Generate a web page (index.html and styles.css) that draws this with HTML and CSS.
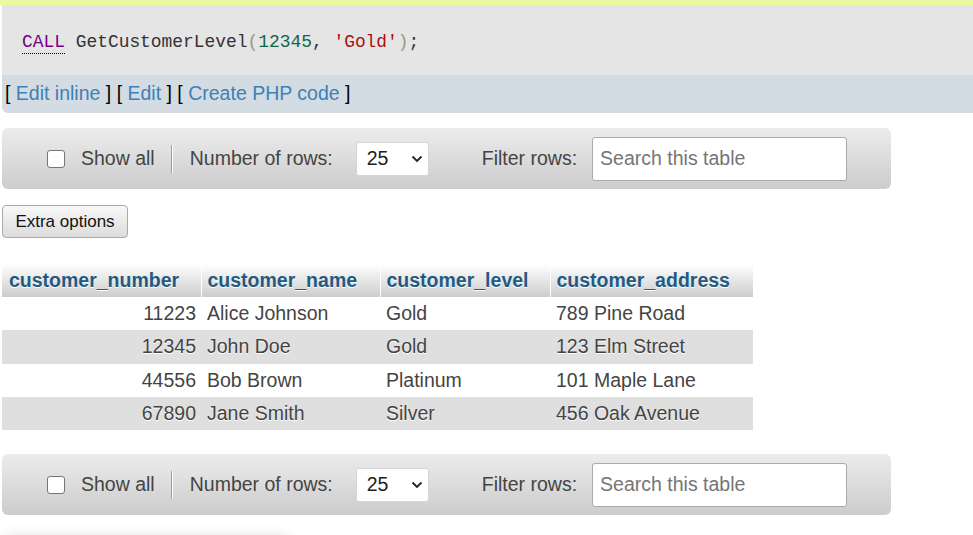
FILE: index.html
```html
<!DOCTYPE html>
<html>
<head>
<meta charset="utf-8">
<link rel="stylesheet" href="styles.css">
</head>
<body>
<div class="topstrip"></div>
<div class="sqlbox">
  <div class="code"><span class="codeline"><span class="kw">CALL</span> <span class="fn">GetCustomerLevel</span><span class="par">(</span><span class="num">12345</span>, <span class="str">'Gold'</span><span class="par">)</span>;</span></div>
  <div class="tools"><span class="toolline">[ <a class="lnk">Edit inline</a> ] [ <a class="lnk">Edit</a> ] [ <a class="lnk">Create PHP code</a> ]</span></div>
</div>

<div class="navbar first">
  <span class="chk"></span>
  <span class="lbl showall">Show all</span>
  <span class="sep"></span>
  <span class="lbl">Number of rows:</span>
  <span class="select">25<svg class="chev" width="12" height="8" viewBox="0 0 12 8"><path d="M1.5 1.5 L6 6 L10.5 1.5" fill="none" stroke="#222" stroke-width="1.8"/></svg></span>
  <span class="lbl filter">Filter rows:</span>
  <span class="search">Search this table</span>
</div>

<div class="extra"><span class="btn">Extra options</span></div>

<table class="data">
  <thead>
    <tr><th class="c1">customer_number</th><th class="c2">customer_name</th><th class="c3">customer_level</th><th class="c4">customer_address</th></tr>
  </thead>
  <tbody>
    <tr><td class="right">11223</td><td>Alice Johnson</td><td>Gold</td><td>789 Pine Road</td></tr>
    <tr class="even"><td class="right">12345</td><td>John Doe</td><td>Gold</td><td>123 Elm Street</td></tr>
    <tr><td class="right">44556</td><td>Bob Brown</td><td>Platinum</td><td>101 Maple Lane</td></tr>
    <tr class="even"><td class="right">67890</td><td>Jane Smith</td><td>Silver</td><td>456 Oak Avenue</td></tr>
  </tbody>
</table>

<div class="navbar second">
  <span class="chk"></span>
  <span class="lbl showall">Show all</span>
  <span class="sep"></span>
  <span class="lbl">Number of rows:</span>
  <span class="select">25<svg class="chev" width="12" height="8" viewBox="0 0 12 8"><path d="M1.5 1.5 L6 6 L10.5 1.5" fill="none" stroke="#222" stroke-width="1.8"/></svg></span>
  <span class="lbl filter">Filter rows:</span>
  <span class="search">Search this table</span>
</div>

<div class="shadowbox"></div>
</body>
</html>
```

FILE: styles.css
```css
html { overflow: hidden; }
body {
  margin: 0;
  font-family: "Liberation Sans", Arial, sans-serif;
  font-size: 19.5px;
  color: #444;
  background: #fff;
}
.topstrip {
  height: 5px;
  background: #ebf9a2;
}
.sqlbox {
  margin-left: 2px;
}
.code {
  height: 70px;
  background: #e5e5e5;
  box-sizing: border-box;
  padding: 3px 0 0 20px;
  display: flex;
  align-items: center;
  font-family: "Liberation Mono", "DejaVu Sans Mono", monospace;
  font-size: 17.9px;
  color: #333;
}
.codeline { white-space: pre; }
.kw {
  color: #770088;
  border-bottom: 1px dotted #000;
  padding-bottom: 1px;
}
.fn { color: #333; }
.par { color: #997; }
.num { color: #116644; }
.str { color: #aa1111; }
.tools {
  height: 38px;
  background: #d3dce3;
  border-bottom-left-radius: 6px;
  display: flex;
  align-items: center;
  padding-left: 3px;
  color: #000;
}
.toolline { white-space: pre; margin-top: -1px; }
.lnk {
  color: #3e80b8;
}
.navbar {
  margin-left: 2px;
  width: 889px;
  height: 61px;
  border-radius: 6px;
  background: linear-gradient(#ececec, #cccccc);
  display: flex;
  align-items: center;
  box-sizing: border-box;
  padding-left: 45px;
}
.navbar.first { margin-top: 15px; }
.navbar.second { margin-top: 24px; }
.chk {
  width: 16px;
  height: 16px;
  border: 1px solid #767676;
  border-radius: 3px;
  background: #fff;
  flex: none;
}
.lbl {
  color: #444;
  white-space: nowrap;
}
.showall { margin-left: 16px; }
.sep {
  width: 1px;
  height: 28px;
  background: #a49c8f;
  border-right: 1px solid #fff;
  margin: 0 17px 0 16px;
}
.select {
  margin-left: 23px;
  width: 73px;
  height: 34px;
  box-sizing: border-box;
  background: #fff;
  border: 1px solid #d6d6d6;
  border-radius: 3px;
  display: flex;
  align-items: center;
  padding-left: 10px;
  color: #222;
}
.chev {
  margin-left: 23px;
}
.filter { margin-left: 53px; }
.search {
  margin-left: 15px;
  width: 255px;
  height: 44px;
  box-sizing: border-box;
  background: #fff;
  border: 1px solid #aaa;
  border-radius: 3px;
  display: flex;
  align-items: center;
  padding-left: 7px;
  color: #757575;
}
.extra {
  margin: 16px 0 0 2px;
  height: 33px;
}
.btn {
  display: inline-flex;
  align-items: center;
  justify-content: center;
  width: 126px;
  height: 33px;
  box-sizing: border-box;
  border: 1px solid #aaa;
  border-radius: 4px;
  background: linear-gradient(#f8f8f8, #dcdcdc);
  font-size: 17px;
  color: #111;
}
.data {
  margin: 26px 0 0 2px;
  border-collapse: collapse;
  table-layout: fixed;
  width: 751px;
}
.data th {
  height: 33px;
  padding: 0 0 0 7px;
  text-align: left;
  font-weight: bold;
  color: #235a81;
  text-shadow: 0 1px 0 #fff;
  background: linear-gradient(#ffffff, #cccccc);
  border-right: 1px solid #fff;
  box-sizing: border-box;
  white-space: nowrap;
}
.data th.c1 { width: 199px; }
.data th.c2 { width: 179px; padding-left: 6px; }
.data th.c3 { width: 170px; padding-left: 6px; }
.data th.c4 { width: 203px; padding-left: 6px; border-right: none; }
.data td {
  height: 33.3px;
  padding: 0 0 0 6px;
  color: #444;
  text-shadow: 0 1px 0 #fff;
  white-space: nowrap;
}
.data td.right {
  text-align: right;
  padding: 0 5px 0 0;
}
.data tr.even td { background: #dfdfdf; }
.shadowbox {
  margin: 24px 0 0 6px;
  width: 280px;
  height: 60px;
  background: #fff;
  box-shadow: 0 0 14px #cccccc;
}
```
